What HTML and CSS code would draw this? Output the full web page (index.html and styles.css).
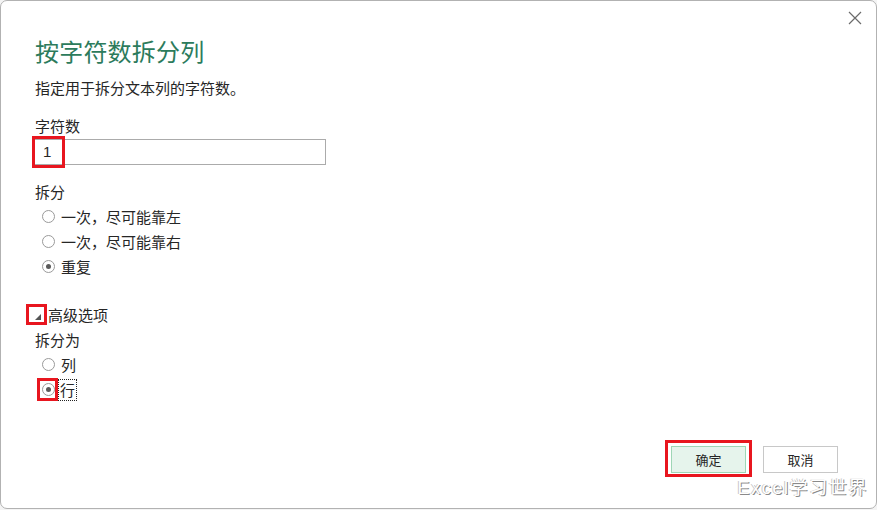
FILE: index.html
```html
<!DOCTYPE html>
<html lang="zh">
<head>
<meta charset="utf-8">
<title>按字符数拆分列</title>
<link rel="stylesheet" href="styles.css">
</head>
<body>
<div class="dialog">
  <button class="close" aria-label="关闭">
    <svg width="14" height="14" viewBox="0 0 14 14"><path d="M1 1L13 13M13 1L1 13" stroke="#6b6b6b" stroke-width="1.2" fill="none"/></svg>
  </button>
  <h1 class="title">按字符数拆分列</h1>
  <p class="subtitle">指定用于拆分文本列的字符数。</p>
  <div class="label label-count">字符数</div>
  <div class="input-wrap">
    <div class="input">1</div>
    <span class="mark mark-input"></span>
  </div>
  <div class="label label-split">拆分</div>
  <div class="radios">
    <div class="radio"><span class="circle"></span><span>一次，尽可能靠左</span></div>
    <div class="radio"><span class="circle"></span><span>一次，尽可能靠右</span></div>
    <div class="radio"><span class="circle checked"></span><span>重复</span></div>
  </div>
  <div class="advanced">
    <span class="tri-wrap"><span class="tri"></span><span class="mark mark-tri"></span></span>
    <span>高级选项</span>
  </div>
  <div class="label label-as">拆分为</div>
  <div class="radios">
    <div class="radio"><span class="circle"></span><span>列</span></div>
    <div class="radio"><span class="circle-wrap"><span class="circle checked"></span><span class="mark mark-radio"></span></span><span class="focus">行</span></div>
  </div>
  <div class="footer">
    <div class="btn-wrap"><button class="btn primary">确定</button><span class="mark mark-btn"></span></div>
    <button class="btn">取消</button>
  </div>
  <div class="watermark">Excel学习世界</div>
</div>
</body>
</html>
```
FILE: styles.css
```css
* { box-sizing: border-box; }
html, body { margin: 0; padding: 0; background: #f4f4f4; }
body {
  font-family: "Noto Sans CJK SC", "Microsoft YaHei", "Noto Sans", sans-serif;
  color: #262626;
  width: 877px;
  height: 510px;
  overflow: hidden;
}
.dialog {
  position: relative;
  width: 877px;
  height: 509px;
  background: #fff;
  border: 1px solid #b2b2b2;
  border-radius: 7px;
  padding: 34px 0 0 34px;
  display: flex;
  flex-direction: column;
  align-items: flex-start;
}
.close {
  position: absolute;
  top: 10px;
  right: 14px;
  width: 14px;
  height: 14px;
  padding: 0;
  border: 0;
  background: none;
  display: flex;
}
.title {
  margin: 0;
  font-size: 24px;
  line-height: 32px;
  font-weight: 400;
  color: #2c7b5c;
  letter-spacing: 0.2px;
}
.subtitle {
  margin: 11px 0 0 0;
  font-size: 15px;
  line-height: 20px;
  color: #262626;
}
.label {
  font-size: 15px;
  line-height: 20px;
}
.label-count { margin-top: 18px; }
.input-wrap {
  position: relative;
  margin-top: 3px;
  margin-left: -2px;
}
.input {
  width: 293px;
  height: 26px;
  border: 1px solid #ababab;
  font-size: 15px;
  line-height: 24px;
  padding-left: 9px;
  font-family: "Liberation Sans", "Noto Sans", sans-serif;
}
.mark {
  position: absolute;
  border: 3px solid #e8161f;
}
.mark-input { left: -1px; top: -3px; width: 33px; height: 32px; }
.label-split { margin-top: 17px; }
.radios {
  display: flex;
  flex-direction: column;
  margin-top: 2px;
  margin-left: 7px;
}
.radio {
  height: 25px;
  display: flex;
  align-items: center;
  font-size: 15px;
  line-height: 20px;
}
.circle-wrap { position: relative; display: flex; }
.circle {
  width: 13px;
  height: 13px;
  border: 1px solid #9a9a9a;
  border-radius: 50%;
  margin-right: 6px;
  position: relative;
  background: #fff;
}
.circle.checked::after {
  content: "";
  position: absolute;
  left: 3px;
  top: 3px;
  width: 5px;
  height: 5px;
  border-radius: 50%;
  background: #5a5a5a;
}
.mark-radio { left: -5px; top: -5px; width: 21px; height: 23px; }
.focus {
  outline: 1px dotted #222;
  outline-offset: 0;
  padding: 0 1px;
  height: 20px;
  margin-left: -2px;
}
.advanced {
  margin-top: 26px;
  display: flex;
  align-items: center;
  font-size: 15px;
  line-height: 20px;
  margin-left: -1px;
}
.tri-wrap {
  position: relative;
  width: 14px;
  height: 20px;
  display: flex;
  align-items: center;
}
.tri {
  width: 0;
  height: 0;
  border-left: 6px solid transparent;
  border-bottom: 6px solid #555;
  margin-left: 1px;
  margin-top: 4px;
}
.mark-tri { left: -8px; top: -1px; width: 21px; height: 21px; }
.label-as { margin-top: 5px; }
.footer {
  margin-top: auto;
  margin-bottom: 35px;
  align-self: flex-end;
  margin-right: 38px;
  display: flex;
  gap: 17px;
}
.btn-wrap { position: relative; display: flex; }
.btn {
  width: 75px;
  height: 27px;
  font-family: inherit;
  font-size: 13px;
  color: #262626;
  background: #fff;
  border: 1px solid #c8c8c8;
  padding: 0;
}
.btn.primary {
  background: #e6f4ec;
  border-color: #9fd6b6;
}
.mark-btn { left: -6px; top: -6px; width: 87px; height: 37px; }
.watermark {
  position: absolute;
  right: 8px;
  bottom: 9px;
  font-family: "Liberation Sans", "Noto Sans CJK SC", sans-serif;
  font-size: 18px;
  line-height: 22px;
  color: #fff;
  text-shadow: 1px 1px 0 #8a8a8a, -1px 0 0 #c8c8c8;
  letter-spacing: 1.6px;
}
```
